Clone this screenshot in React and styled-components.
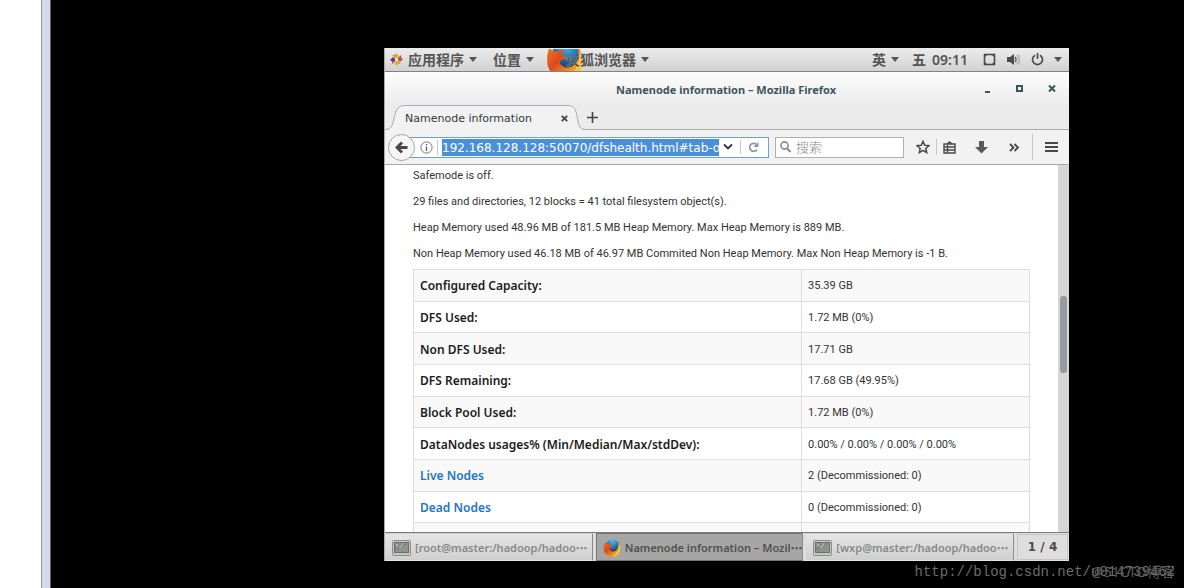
import React from "react";
import styled, { createGlobalStyle } from "styled-components";

const UI = `"Noto Sans", "Noto Sans CJK SC", sans-serif`;

const Global = createGlobalStyle`
  *, *::before, *::after { box-sizing: border-box; }
  body { margin: 0; background: #000; }
  button, input { font: inherit; color: inherit; border: 0; padding: 0; margin: 0; background: none; }
  button { cursor: pointer; }
  svg { display: block; flex: none; }
`;

const Screen = styled.div`
  display: flex;
  height: 100vh;
  background: #000;
  font-family: ${UI};
`;
const Margin = styled.div`
  flex: none;
  width: 41px;
  background: #fff;
`;
const Edge = styled.div`
  flex: none;
  width: 10px;
  background: #d3d8ec;
  border-left: 1px solid #9295a4;
  border-right: 1px solid #66635e;
`;
const Display = styled.main`
  flex: 1;
  min-width: 0;
  display: flex;
  flex-direction: column;
  padding: 48px 115px 0 333px;
`;
const Desktop = styled.div`
  flex: 1;
  min-height: 0;
  display: flex;
  flex-direction: column;
  background: #ededed;
  border-left: 1px solid #aaa;
  overflow: hidden;
`;

const Panel = styled.header`
  flex: none;
  height: 24px;
  display: flex;
  align-items: center;
  justify-content: space-between;
  padding: 0 7px 0 5px;
  background: linear-gradient(#ececec, #d2d2d2);
  border-bottom: 1px solid #828282;
  color: #555;
  font: 600 14px/20px ${UI};
`;
const PanelGroup = styled.div`
  display: flex;
  align-items: center;
  gap: ${(p) => p.$gap}px;
`;
const PanelItem = styled.button`
  display: flex;
  align-items: center;
  gap: ${(p) => p.$gap || 5}px;
  white-space: nowrap;
`;
const Clock = styled.time`
  display: flex;
  gap: 6px;
  margin: 0 4px 0 2px;
  white-space: nowrap;
`;
const FoxLabel = styled.span`
  margin-left: -23px;
  text-shadow: 0 0 1px #ddd;
`;
const FoxClip = styled.span`
  display: flex;
  align-items: center;
  height: 22px;
  margin-left: -4px;
  overflow: hidden;
`;

const TitleBar = styled.div`
  flex: none;
  height: 33px;
  display: grid;
  grid-template-columns: 1fr auto 1fr;
  align-items: center;
  padding-right: 12px;
  background: linear-gradient(#fdfdfd, #ececec);
`;
const Title = styled.h1`
  margin: 0;
  grid-column: 2;
  padding: 2px 0 0 10px;
  color: #3d555e;
  font: 700 11px/32px ${UI};
  white-space: nowrap;
`;
const WindowButtons = styled.div`
  display: flex;
  justify-content: flex-end;
  gap: 22px;
`;

const TabStrip = styled.div`
  flex: none;
  height: 25px;
  display: flex;
  background: linear-gradient(to top, #a9adb0 1px, #ececec 1px);
`;
const Tab = styled.div`
  display: flex;
  height: 25px;
  width: 200px;
`;
const TabBody = styled.div`
  flex: 1;
  min-width: 0;
  display: flex;
  align-items: center;
  justify-content: space-between;
  background: #f2f2f2;
  border-top: 1px solid #a6adb6;
  color: #33393c;
  font: 400 11px/26px "DejaVu Sans", sans-serif;
  white-space: nowrap;
`;
const TabLabel = styled.span`
  padding-top: 2px;
`;
const NewTab = styled.button`
  padding: 0 2px;
`;

const NavBar = styled.div`
  flex: none;
  height: 35px;
  display: flex;
  align-items: center;
  padding: 0 11px 0 3px;
  background: #f2f2f2;
  border-bottom: 1px solid #a9a9a9;
`;
const Back = styled.button`
  position: relative;
  flex: none;
  display: grid;
  place-items: center;
  width: 27px;
  height: 27px;
  border: 1px solid #a5a5a5;
  border-radius: 50%;
  background: #f6f6f6;
`;
const UrlBar = styled.div`
  flex: 1;
  min-width: 0;
  display: flex;
  align-items: center;
  height: 21px;
  margin-left: -6px;
  padding: 0 5px 0 10px;
  border: 1px solid #6c9fd8;
  background: #fff;
`;
const UrlInput = styled.input`
  flex: 1;
  min-width: 0;
  height: 17px;
  padding-top: 1px;
  background: #4a90d9;
  color: #fff;
  outline: none;
  font: 400 12px/16px "DejaVu Sans", sans-serif;
`;
const Rule = styled.span`
  flex: none;
  width: 1px;
  height: ${(p) => p.$h}px;
  margin: 0 ${(p) => p.$m}px;
  background: #c8c8c8;
`;
const IconButton = styled.button`
  flex: none;
  display: grid;
  place-items: center;
`;
const SearchBox = styled.label`
  flex: none;
  display: flex;
  align-items: center;
  gap: 5px;
  width: 129px;
  height: 21px;
  margin-left: 6px;
  padding: 0 4px;
  border: 1px solid #b0b0b0;
  background: #fff;
`;
const SearchInput = styled.input`
  flex: 1;
  min-width: 0;
  outline: none;
  font: 300 13px/17px ${UI};
  &::placeholder { color: #8b8b8b; opacity: 1; }
`;
const Tools = styled.div`
  flex: none;
  display: flex;
  align-items: center;
  margin-left: 12px;
`;

const Viewport = styled.div`
  flex: 1;
  min-height: 0;
  display: flex;
  background: #fff;
  overflow: hidden;
`;
const Page = styled.article`
  flex: 1;
  min-width: 0;
  padding: 0 28px;
  color: #333;
  font: 400 11px/16px Roboto, sans-serif;
`;
const Line = styled.p`
  margin: 0;
  padding: 3px 0 7px;
  white-space: nowrap;
`;
const Table = styled.table`
  width: 100%;
  height: 286px;
  border-collapse: collapse;
  border: 1px solid #ddd;
  table-layout: fixed;
  tr:nth-child(odd) { background: #f9f9f9; }
`;
const Name = styled.th`
  width: 63%;
  padding: 2px 6px 0;
  border: 1px solid #ddd;
  text-align: left;
  color: #1c1c1c;
  font: 600 12px/16px ${UI};
`;
const Value = styled.td`
  padding: 2px 6px 0;
  border: 1px solid #ddd;
`;
const Link = styled.a`
  color: #2376bd;
  text-decoration: none;
`;
const Track = styled.div`
  flex: none;
  width: 11px;
  padding: 131px 2px 0;
  background: #d6d6d6;
`;
const Thumb = styled.div`
  height: 77px;
  border-radius: 3px;
  background: #989b9d;
`;

const TaskBar = styled.footer`
  flex: none;
  height: 29px;
  display: flex;
  gap: 3px;
  border-top: 1px solid #7c7c7c;
  background: #dedede;
`;
const Task = styled.button`
  flex: 1;
  min-width: 0;
  display: flex;
  align-items: center;
  gap: 4px;
  padding: 2px 6px 0;
  background: ${(p) => (p.$active ? "#a6a6a6" : "linear-gradient(#e6e6e6, #cfcfcf)")};
  border: 1px solid ${(p) => (p.$active ? "#747474" : "transparent")};
  border-right-color: #8b8b8b;
  color: ${(p) => (p.$active ? "#505050" : "#888")};
  font: 600 11px/24px ${UI};
  white-space: nowrap;
`;
const Dots = styled.span`
  font-family: "DejaVu Sans", sans-serif;
`;
const Pager = styled.div`
  flex: none;
  width: 51px;
  margin: 1px 1px 1px 0;
  border: 1px solid #c6c6c6;
  color: #4c4c4c;
  text-align: center;
  font: 700 12px/25px "DejaVu Sans", sans-serif;
`;

const Marks = styled.div`
  flex: none;
  display: grid;
  justify-items: end;
  height: 27px;
  padding-top: 1px;
  margin-right: -106px;
  > * { grid-area: 1 / 1; white-space: nowrap; }
`;
const BlogMark = styled.span`
  color: #6c6d68;
  font: 400 14px/20px "Liberation Mono", monospace;
`;
const HostMark = styled.span`
  color: #5c5c5c;
  font: 400 14px/19px ${UI};
`;

const Caret = () => (
  <svg width="8" height="5" viewBox="0 0 8 5"><path d="M0 0h8L4 5z" fill="#555" /></svg>
);

const Fox = ({ size, id }) => (
  <svg width={size} height={size} viewBox="0 0 32 32">
    <defs>
      <radialGradient id={id + "g"} cx=".5" cy=".1" r=".8">
        <stop offset="0" stopColor="#4cc3ee" /><stop offset=".5" stopColor="#2277b8" /><stop offset="1" stopColor="#123060" />
      </radialGradient>
      <linearGradient id={id + "f"} x1="0" y1="0" x2="1" y2=".9">
        <stop offset="0" stopColor="#ef7a22" /><stop offset=".4" stopColor="#dd4a1c" />
        <stop offset=".7" stopColor="#f58a1f" /><stop offset="1" stopColor="#fed43b" />
      </linearGradient>
    </defs>
    <circle cx="17" cy="14" r="13" fill={`url(#${id}g)`} />
    <path d="M3 5C1 10 1 13 1 17a15 14.500 0 0 0 30 0c0-5-2-10-6-13 3 5 3 10 1 13-2 4-6 6-10 5-3-1-5-3-4-5 1-2 4-1 6-3 0-1-3-2-5-2 0-2 1-3 3-4-3-1-5 0-6 1C6 9 4 8 3 5z" fill={`url(#${id}f)`} />
    <path d="M28 8c4 6 3 13-1 18-3 3-6 5-10 5 8-4 12-13 11-23z" fill="#fcc83a" />
  </svg>
);

const Pinwheel = () => (
  <svg width="13" height="13" viewBox="0 0 13 13">
    <path d="M6 0l3 3-3 3-2-3z" fill="#e9a623" /><path d="M13 6l-3 3-3-3 3-2z" fill="#d84f30" />
    <path d="M7 13l-3-3 3-3 2 3z" fill="#e0b32d" /><path d="M0 7l3-3 3 3-3 2z" fill="#6d2b88" />
    <path d="M2 2h3v3zM11 11H8V8z" fill="#8fb53b" /><path d="M11 2v3H8zM2 11V8h3z" fill="#a5478f" />
    <path d="M6.500 5l1.500 1.500L6.500 8 5 6.500z" fill="#fff" />
  </svg>
);

const Terminal = () => (
  <svg width="19" height="16" viewBox="0 0 19 16">
    <rect x=".5" y=".5" width="18" height="15" rx="1" fill="#c5c7c5" stroke="#8b8d8b" />
    <rect x="2.500" y="2.500" width="14" height="10" fill="#858a86" stroke="#6b706c" />
    <path d="M4 4l2 1-2 1M7 7h2l2-4" fill="none" stroke="#c3c7c3" />
    <path d="M3 12l13-8v8z" fill="#949995" opacity=".7" />
  </svg>
);

const rows = [
  ["Configured Capacity:", "35.39 GB"],
  ["DFS Used:", "1.72 MB (0%)"],
  ["Non DFS Used:", "17.71 GB"],
  ["DFS Remaining:", "17.68 GB (49.95%)"],
  ["Block Pool Used:", "1.72 MB (0%)"],
  ["DataNodes usages% (Min/Median/Max/stdDev):", "0.00% / 0.00% / 0.00% / 0.00%"],
  ["Live Nodes", "2 (Decommissioned: 0)", true],
  ["Dead Nodes", "0 (Decommissioned: 0)", true],
  ["\u00a0", "\u00a0"],
];

export default function App() {
  return (
    <Screen>
      <Global />
      <Margin />
      <Edge />
      <Display>
        <Desktop>
          <Panel>
            <PanelGroup $gap={16}>
              <PanelItem><Pinwheel />应用程序 <Caret /></PanelItem>
              <PanelItem>位置 <Caret /></PanelItem>
              <PanelItem>
                <FoxClip><Fox size={38} id="panel" /></FoxClip>
                <FoxLabel>火狐浏览器</FoxLabel><Caret />
              </PanelItem>
            </PanelGroup>
            <PanelGroup $gap={11}>
              <PanelItem>英 <Caret /></PanelItem>
              <Clock><span>五</span><span>09:11</span></Clock>
              <svg width="13" height="13" viewBox="0 0 13 13">
                <rect x="1.500" y="1.500" width="10" height="10" fill="none" stroke="#4c4c4c" strokeWidth="1.600" />
                <path d="M2 4V2h2zM9 2h2v2zM2 9v2h2zM11 9v2H9z" fill="#4c4c4c" />
              </svg>
              <svg width="13" height="13" viewBox="0 0 13 13">
                <path d="M0 4h3l4-3v11L3 9H0z" fill="#4c4c4c" />
                <path d="M8 4q2 2.500 0 5" fill="none" stroke="#666" strokeWidth="1.500" />
                <path d="M9.500 2q4 4.500 0 9M11 1q4 5.500 0 11" fill="none" stroke="#aaa" />
              </svg>
              <PanelItem aria-label="Power" $gap={10}>
                <svg width="13" height="13" viewBox="0 0 13 13">
                  <path d="M4 2.200a5 5 0 1 0 5 0M6.500 0v6" fill="none" stroke="#4c4c4c" strokeWidth="1.700" />
                </svg>
                <Caret />
              </PanelItem>
            </PanelGroup>
          </Panel>

          <TitleBar>
            <Title>Namenode information – Mozilla Firefox</Title>
            <WindowButtons>
              <IconButton aria-label="Minimize">
                <svg width="10" height="10" viewBox="0 0 10 10"><path d="M2 7h5v2H2z" fill="#3d555e" /></svg>
              </IconButton>
              <IconButton aria-label="Maximize">
                <svg width="10" height="10" viewBox="0 0 10 10"><rect x="2" y="2" width="5" height="5" fill="none" stroke="#3d555e" strokeWidth="2" /></svg>
              </IconButton>
              <IconButton aria-label="Close">
                <svg width="10" height="10" viewBox="0 0 10 10"><path d="M2 1.500l6 6M8 1.500l-6 6" stroke="#3d555e" strokeWidth="2" /></svg>
              </IconButton>
            </WindowButtons>
          </TitleBar>

          <TabStrip>
            <Tab>
              <svg width="20" height="25" viewBox="0 0 20 25">
                <path d="M0 25C14 25 4 .5 20 .5V25z" fill="#f2f2f2" />
                <path d="M0 24.500C14 24.500 4 .5 20 .5" fill="none" stroke="#a6adb6" />
              </svg>
              <TabBody>
                <TabLabel>Namenode information</TabLabel>
                <IconButton aria-label="Close tab">
                  <svg width="7" height="7" viewBox="0 0 7 7"><path d="M.8.8l5.400 5.400M6.200.8L.8 6.200" stroke="#444" strokeWidth="1.800" /></svg>
                </IconButton>
              </TabBody>
              <svg width="17" height="25" viewBox="0 0 17 25">
                <path d="M0 .5C14 .5 5 25 17 25H0z" fill="#f2f2f2" />
                <path d="M0 .5C14 .5 5 24.500 17 24.500" fill="none" stroke="#a6adb6" />
              </svg>
            </Tab>
            <NewTab aria-label="New tab">
              <svg width="11" height="11" viewBox="0 0 11 11"><path d="M5.500 0v11M0 5.500h11" stroke="#444" strokeWidth="1.600" /></svg>
            </NewTab>
          </TabStrip>

          <NavBar>
            <Back aria-label="Back">
              <svg width="13" height="13" viewBox="0 0 13 13"><path d="M12.500 6.500H3M7 1.500l-5 5 5 5" fill="none" stroke="#484848" strokeWidth="2.800" /></svg>
            </Back>
            <UrlBar>
              <IconButton aria-label="Site information">
                <svg width="13" height="13" viewBox="0 0 13 13">
                  <circle cx="6.500" cy="6.500" r="5.600" fill="none" stroke="#777" />
                  <path d="M6.500 5.500v4.500M6.500 3v1.500" stroke="#666" strokeWidth="1.400" />
                </svg>
              </IconButton>
              <Rule $h={15} $m={4} />
              <UrlInput aria-label="Address" defaultValue="192.168.128.128:50070/dfshealth.html#tab-overview" />
              <IconButton aria-label="History">
                <svg width="18" height="8" viewBox="0 0 18 8"><path d="M5 1.500l4 4 4-4" fill="none" stroke="#333" strokeWidth="1.900" /></svg>
              </IconButton>
              <Rule $h={14} $m={3} />
              <IconButton aria-label="Reload">
                <svg width="19" height="12" viewBox="0 0 19 12">
                  <path d="M13 8.500a4 4 0 1 1-.5-5" fill="none" stroke="#8895a2" strokeWidth="1.700" />
                  <path d="M14.500 1v5H9.500z" fill="#8895a2" />
                </svg>
              </IconButton>
            </UrlBar>
            <SearchBox>
              <svg width="11" height="12" viewBox="0 0 11 12">
                <circle cx="4.500" cy="4.500" r="3.600" fill="none" stroke="#8b8b8b" strokeWidth="1.600" />
                <path d="M7 7.500l3.500 3.500" stroke="#8b8b8b" strokeWidth="2" />
              </svg>
              <SearchInput aria-label="搜索" placeholder="搜索" />
            </SearchBox>
            <Tools>
              <IconButton aria-label="Bookmark">
                <svg width="14" height="14" viewBox="0 0 14 14"><path d="M7 1.300l1.700 3.900 4.300.4-3.200 2.800.9 4.200L7 10.400l-3.700 2.200.9-4.200L1 5.600l4.300-.4z" fill="none" stroke="#484848" strokeWidth="1.500" /></svg>
              </IconButton>
              <Rule $h={16} $m={6} />
              <IconButton aria-label="Bookmarks list">
                <svg width="13" height="13" viewBox="0 0 13 13">
                  <path d="M1 3h11v9H1zM1 6h11M1 9h11M4.500 4v8M4 3l2.500-2L9 3" fill="none" stroke="#484848" strokeWidth="1.400" />
                </svg>
              </IconButton>
              <Rule $h={0} $m={9} />
              <IconButton aria-label="Downloads">
                <svg width="13" height="13" viewBox="0 0 13 13"><path d="M4 0h5v6h4l-6.500 6.500L0 6h4z" fill="#5b5b5b" /></svg>
              </IconButton>
              <Rule $h={0} $m={10} />
              <IconButton aria-label="More tools">
                <svg width="11" height="9" viewBox="0 0 11 9"><path d="M1 1l3.500 3.500L1 8M5.500 1L9 4.500 5.500 8" fill="none" stroke="#484848" strokeWidth="1.800" /></svg>
              </IconButton>
              <Rule $h={26} $m={12} />
              <IconButton aria-label="Menu">
                <svg width="13" height="12" viewBox="0 0 13 12"><path d="M0 2h13M0 6h13M0 10h13" stroke="#484848" strokeWidth="2" /></svg>
              </IconButton>
            </Tools>
          </NavBar>

          <Viewport>
            <Page>
              <Line>Safemode is off.</Line>
              <Line>29 files and directories, 12 blocks = 41 total filesystem object(s).</Line>
              <Line>Heap Memory used 48.96 MB of 181.5 MB Heap Memory. Max Heap Memory is 889 MB.</Line>
              <Line>Non Heap Memory used 46.18 MB of 46.97 MB Commited Non Heap Memory. Max Non Heap Memory is -1 B.</Line>
              <Table>
                <tbody>
                  {rows.map(([name, value, link], i) => (
                    <tr key={i}>
                      <Name scope="row">{link ? <Link href="#nodes">{name}</Link> : name}</Name>
                      <Value>{value}</Value>
                    </tr>
                  ))}
                </tbody>
              </Table>
            </Page>
            <Track><Thumb /></Track>
          </Viewport>

          <TaskBar>
            <Task><Terminal /><span>[root@master:/hadoop/hadoo<Dots>⋯</Dots></span></Task>
            <Task $active><Fox size={18} id="task" /><span>Namenode information – Mozil<Dots>⋯</Dots></span></Task>
            <Task><Terminal /><span>[wxp@master:/hadoop/hadoo<Dots>⋯</Dots></span></Task>
            <Pager>1 / 4</Pager>
          </TaskBar>
        </Desktop>
        <Marks>
          <BlogMark>http://blog.csdn.net/u014739462</BlogMark>
          <HostMark>@51CTO博客</HostMark>
        </Marks>
      </Display>
    </Screen>
  );
}
